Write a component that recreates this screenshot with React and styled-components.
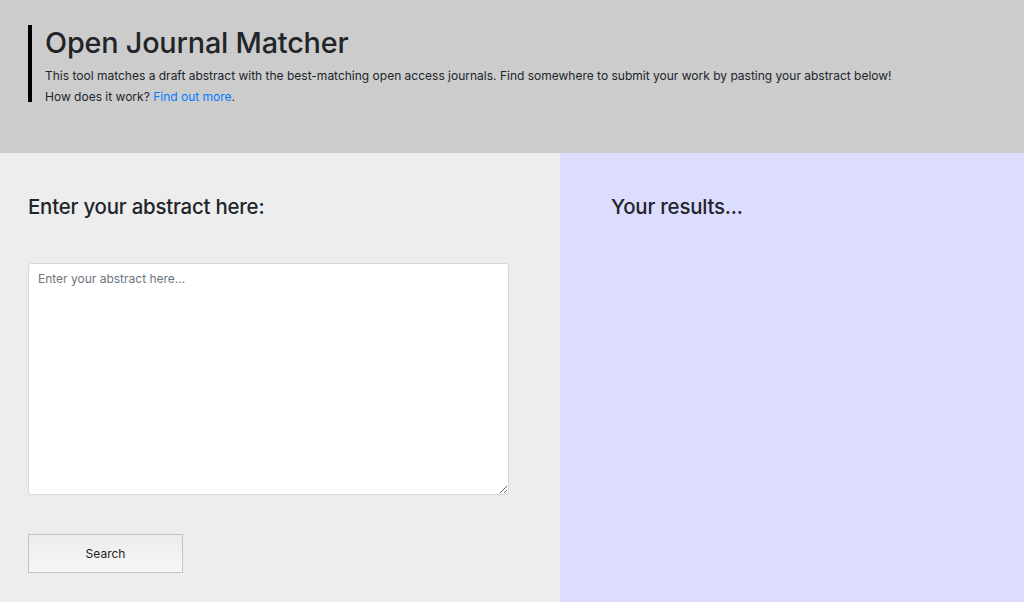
import React from 'react';
import styled, { createGlobalStyle } from 'styled-components';

const GlobalStyle = createGlobalStyle`
  html, body {
    margin: 0;
    padding: 0;
    height: 100%;
  }
  body {
    font-family: Inter, "Noto Sans", "Liberation Sans", sans-serif;
    color: #212529;
    background: #ededed;
  }
  #root {
    height: 100%;
  }
`;

const Page = styled.div`
  display: flex;
  flex-direction: column;
  height: 602px;
  overflow: hidden;
`;

const Header = styled.header`
  background: #cccccc;
  height: 153px;
  box-sizing: border-box;
  padding: 25px 28px 0;
`;

const Intro = styled.div`
  border-left: 4px solid #000;
  padding-left: 13px;
  height: 77px;
`;

const Title = styled.h1`
  margin: 0;
  padding-top: 1px;
  font-size: 28.8px;
  font-weight: 500;
  line-height: 34px;
  letter-spacing: -0.2px;
`;

const Lead = styled.p`
  margin: 6px 0 0;
  font-size: 12px;
  line-height: 20.5px;
`;

const Link = styled.a`
  color: #007bff;
  text-decoration: none;
`;

const Main = styled.main`
  flex: 1;
  display: flex;
`;

const Column = styled.section`
  box-sizing: border-box;
  background: ${(p) => p.$bg};
  width: ${(p) => p.$width};
  flex: ${(p) => (p.$grow ? 1 : 'none')};
  padding: ${(p) => p.$pad};
`;

const Heading = styled.h2`
  margin: 0;
  font-size: 20.4px;
  font-weight: 500;
  line-height: 24px;
  letter-spacing: -0.2px;
`;

const Abstract = styled.textarea`
  display: block;
  box-sizing: border-box;
  width: 481px;
  height: 232px;
  margin-top: 44px;
  padding: 7px 9px;
  border: 1px solid #d6d8db;
  border-radius: 3px;
  background: #fff;
  font-family: Inter, "Noto Sans", sans-serif;
  font-size: 12px;
  line-height: 16px;
  color: #495057;
  resize: both;
  outline: none;

  &::placeholder {
    color: #6c757d;
  }
`;

const SearchButton = styled.button`
  display: block;
  margin-top: 39px;
  width: 155px;
  height: 39px;
  border: 1px solid #c4c4c4;
  background: linear-gradient(#ececec, #f6f6f6);
  font-family: Inter, "Noto Sans", sans-serif;
  font-size: 12px;
  color: #222;
  cursor: pointer;
`;

export default function App() {
  return (
    <>
      <GlobalStyle />
      <Page>
        <Header>
          <Intro>
            <Title>Open Journal Matcher</Title>
            <Lead>
              This tool matches a draft abstract with the best-matching open access journals. Find
              somewhere to submit your work by pasting your abstract below!
              <br />
              How does it work? <Link href="#">Find out more</Link>.
            </Lead>
          </Intro>
        </Header>
        <Main>
          <Column $bg="#ededed" $width="560px" $pad="42px 28px 0">
            <Heading>Enter your abstract here:</Heading>
            <Abstract placeholder="Enter your abstract here..." />
            <SearchButton type="button">Search</SearchButton>
          </Column>
          <Column $bg="#dcdcff" $grow $pad="42px 51px 0">
            <Heading>Your results...</Heading>
          </Column>
        </Main>
      </Page>
    </>
  );
}
